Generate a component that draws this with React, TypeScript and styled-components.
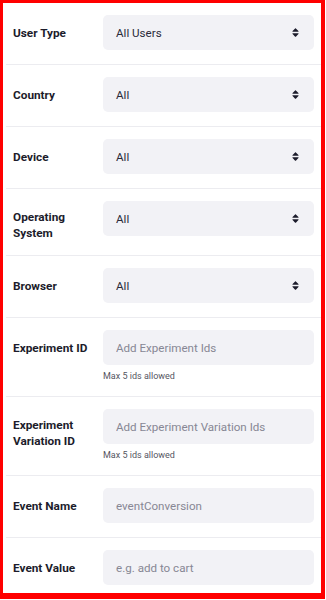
import React from "react";
import styled, { createGlobalStyle } from "styled-components";
import { FaSort } from "react-icons/fa";

const GlobalStyle = createGlobalStyle`
  html, body {
    margin: 0;
    padding: 0;
    background: #ffffff;
  }
  body {
    font-family: Roboto, "Noto Sans", sans-serif;
  }
`;

const Panel = styled.div`
  box-sizing: border-box;
  width: 325px;
  height: 599px;
  overflow: hidden;
  border-style: solid;
  border-color: #ff0000;
  border-width: 3px 4px 6px 3px;
  background: #ffffff;
`;

const Row = styled.div<{ last?: boolean }>`
  display: flex;
  align-items: flex-start;
  margin-left: 3px;
  padding: 12px 7px 14px 7px;
  border-bottom: ${(p) => (p.last ? "none" : "1px solid #ececf0")};
`;

const Label = styled.div<{ wrap?: boolean }>`
  flex: 0 0 90px;
  box-sizing: border-box;
  padding-top: ${(p) => (p.wrap ? "8px" : "0")};
  height: ${(p) => (p.wrap ? "auto" : "35px")};
  display: flex;
  align-items: center;
  font-size: 11.8px;
  font-weight: 700;
  line-height: 16px;
  color: #1c1c2b;
`;

const Field = styled.div`
  flex: 1;
  display: flex;
  flex-direction: column;
`;

const Select = styled.div`
  box-sizing: border-box;
  height: 35px;
  display: flex;
  align-items: center;
  justify-content: space-between;
  padding: 0 13px;
  background: #f2f2f6;
  border-radius: 5px;
  font-size: 11.6px;
  color: #2a2a3a;

  svg {
    width: 11px;
    height: 11px;
    color: #1c1c2b;
  }
`;

const TextInput = styled.input`
  box-sizing: border-box;
  height: 35px;
  width: 100%;
  padding: 0 13px;
  border: none;
  outline: none;
  background: #f2f2f6;
  border-radius: 5px;
  font-family: Roboto, "Noto Sans", sans-serif;
  font-size: 11.6px;
  color: #2a2a3a;

  &::placeholder {
    color: #878794;
  }
`;

const Help = styled.div`
  margin-top: 5px;
  font-size: 9px;
  line-height: 12px;
  color: #55555f;
`;

const selects = [
  { label: "User Type", value: "All Users" },
  { label: "Country", value: "All" },
  { label: "Device", value: "All" },
  { label: "Operating System", value: "All", wrap: true },
  { label: "Browser", value: "All" },
];

const inputs = [
  { label: "Experiment ID", placeholder: "Add Experiment Ids", help: true },
  {
    label: "Experiment Variation ID",
    placeholder: "Add Experiment Variation Ids",
    help: true,
    wrap: true,
  },
  { label: "Event Name", placeholder: "eventConversion" },
  { label: "Event Value", placeholder: "e.g. add to cart" },
];

const App: React.FC = () => {
  return (
    <>
      <GlobalStyle />
      <Panel>
        {selects.map((s) => (
          <Row key={s.label}>
            <Label wrap={s.wrap}>{s.label}</Label>
            <Field>
              <Select>
                <span>{s.value}</span>
                <FaSort />
              </Select>
            </Field>
          </Row>
        ))}
        {inputs.map((f, i) => (
          <Row key={f.label} last={i === inputs.length - 1}>
            <Label wrap={f.wrap}>{f.label}</Label>
            <Field>
              <TextInput placeholder={f.placeholder} />
              {f.help && <Help>Max 5 ids allowed</Help>}
            </Field>
          </Row>
        ))}
      </Panel>
    </>
  );
};

export default App;
